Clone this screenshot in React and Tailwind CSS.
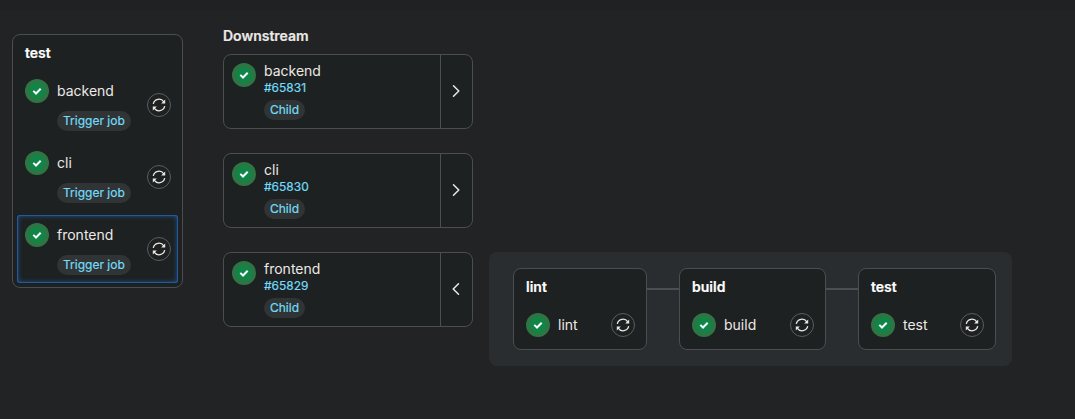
import React from "react";

function StatusIcon() {
  return (
    <span className="flex size-6 shrink-0 items-center justify-center rounded-full bg-[#2f7544]">
      <span className="flex size-4 items-center justify-center rounded-full bg-[#108548]">
        <svg className="size-4" viewBox="0 0 16 16" fill="none" stroke="#fff" strokeWidth="2">
          <path d="M4.3 7.9 7 10.5 11.7 5.7" />
        </svg>
      </span>
    </span>
  );
}

function RetryButton() {
  return (
    <button className="flex size-6 shrink-0 items-center justify-center rounded-full border border-[#5b5d5f] text-[#ece9e4]">
      <svg className="size-4" viewBox="0 0 16 16" fill="none" stroke="currentColor" strokeWidth="1.3">
        <path d="M2.3 6.8A5.8 5.8 0 0 1 12.8 4.8M13.7 9.2A5.8 5.8 0 0 1 3.2 11.2" />
        <path d="M14.2 2.5V6.5H10.2zM1.8 13.5V9.5h4z" fill="currentColor" stroke="none" />
      </svg>
    </button>
  );
}

function Badge({ children }) {
  return (
    <span className="h-5 w-fit rounded-full bg-[#303435] px-1.5 text-[12px] leading-5 text-[#74dcf8] [-webkit-text-stroke:0.2px_currentColor]">
      {children}
    </span>
  );
}

function TriggerJob({ name, selected }) {
  return (
    <div
      className={
        "flex h-[68px] items-center justify-between rounded-[3px] px-2 " +
        (selected ? "shadow-[inset_0_0_0_1px_#245a9b,inset_0_0_5px_1px_#1f4f8c]" : "")
      }
    >
      <div className="flex h-[52px] gap-2">
        <StatusIcon />
        <div className="flex flex-col gap-2">
          <span className="h-6 leading-6">{name}</span>
          <Badge>Trigger job</Badge>
        </div>
      </div>
      <div className="-mr-px">
        <RetryButton />
      </div>
    </div>
  );
}

function Downstream({ name, id, open }) {
  return (
    <div className="flex h-[75px] w-[250px] rounded-lg border border-[#4b4e50] bg-[#1d2121]">
      <div className="flex flex-1 gap-2 p-2">
        <StatusIcon />
        <div className="flex flex-col">
          <span className="h-4 leading-4">{name}</span>
          <a className="h-4 text-[12px] leading-[17px] text-[#74dcf8] [-webkit-text-stroke:0.2px_currentColor]">{id}</a>
          <div className="mt-[5px] flex">
            <Badge>Child</Badge>
          </div>
        </div>
      </div>
      <button className="flex w-8 items-center justify-center border-l border-[#4b4e50] pb-px pr-0.5 text-[#ece9e4]">
        <svg className="size-4" viewBox="0 0 16 16" fill="none" stroke="currentColor" strokeWidth="1.5" strokeLinecap="round" strokeLinejoin="round">
          <path d={open ? "M10.5 2.7 5.2 8l5.3 5.3" : "M5.5 2.7 10.8 8l-5.3 5.3"} />
        </svg>
      </button>
    </div>
  );
}

function Stage({ name, width }) {
  return (
    <div className={"flex h-[82px] shrink-0 flex-col rounded-lg border border-[#4b4e50] bg-[#1d2121] pl-3 pr-[11px] " + width}>
      <h3 className="h-9 font-semibold leading-9 text-white [-webkit-text-stroke:0.2px_currentColor]">{name}</h3>
      <div className="mt-2 flex items-center gap-2">
        <StatusIcon />
        <span className="h-6 flex-1 leading-6">{name}</span>
        <RetryButton />
      </div>
    </div>
  );
}

function Connector() {
  return <div className="mt-5 h-0.5 w-8 shrink-0 bg-[#4b4e52]" />;
}

export default function App() {
  return (
    <div className="h-[419px] w-[1075px] overflow-hidden bg-[#222325] font-['Inter',sans-serif] text-[14px] text-[#ece9e6]">
      <div className="h-2.5 bg-[#1f2122]" />
      <main className="flex items-start pl-3">
        <section className="mt-6 flex h-[254px] w-[171px] flex-col rounded-lg border border-[#4b4e50] bg-[#1d2121] px-1 pb-1">
          <h3 className="h-9 pl-2 font-semibold leading-9 text-white [-webkit-text-stroke:0.2px_currentColor]">test</h3>
          <div className="flex flex-col gap-1">
            <TriggerJob name="backend" />
            <TriggerJob name="cli" />
            <TriggerJob name="frontend" selected />
          </div>
        </section>
        <section className="ml-10 mt-4">
          <h2 className="h-7 font-semibold leading-5 [-webkit-text-stroke:0.2px_currentColor]">Downstream</h2>
          <div className="flex flex-col gap-6">
            <Downstream name="backend" id="#65831" />
            <Downstream name="cli" id="#65830" />
            <Downstream name="frontend" id="#65829" open />
          </div>
        </section>
        <section className="ml-4 mt-[242px] flex h-[114px] w-[523px] items-start rounded-lg bg-[#2a2d30] py-4 pl-6 pr-4">
          <Stage name="lint" width="w-[134px]" />
          <Connector />
          <Stage name="build" width="w-[147px]" />
          <Connector />
          <Stage name="test" width="w-[138px]" />
        </section>
      </main>
    </div>
  );
}
